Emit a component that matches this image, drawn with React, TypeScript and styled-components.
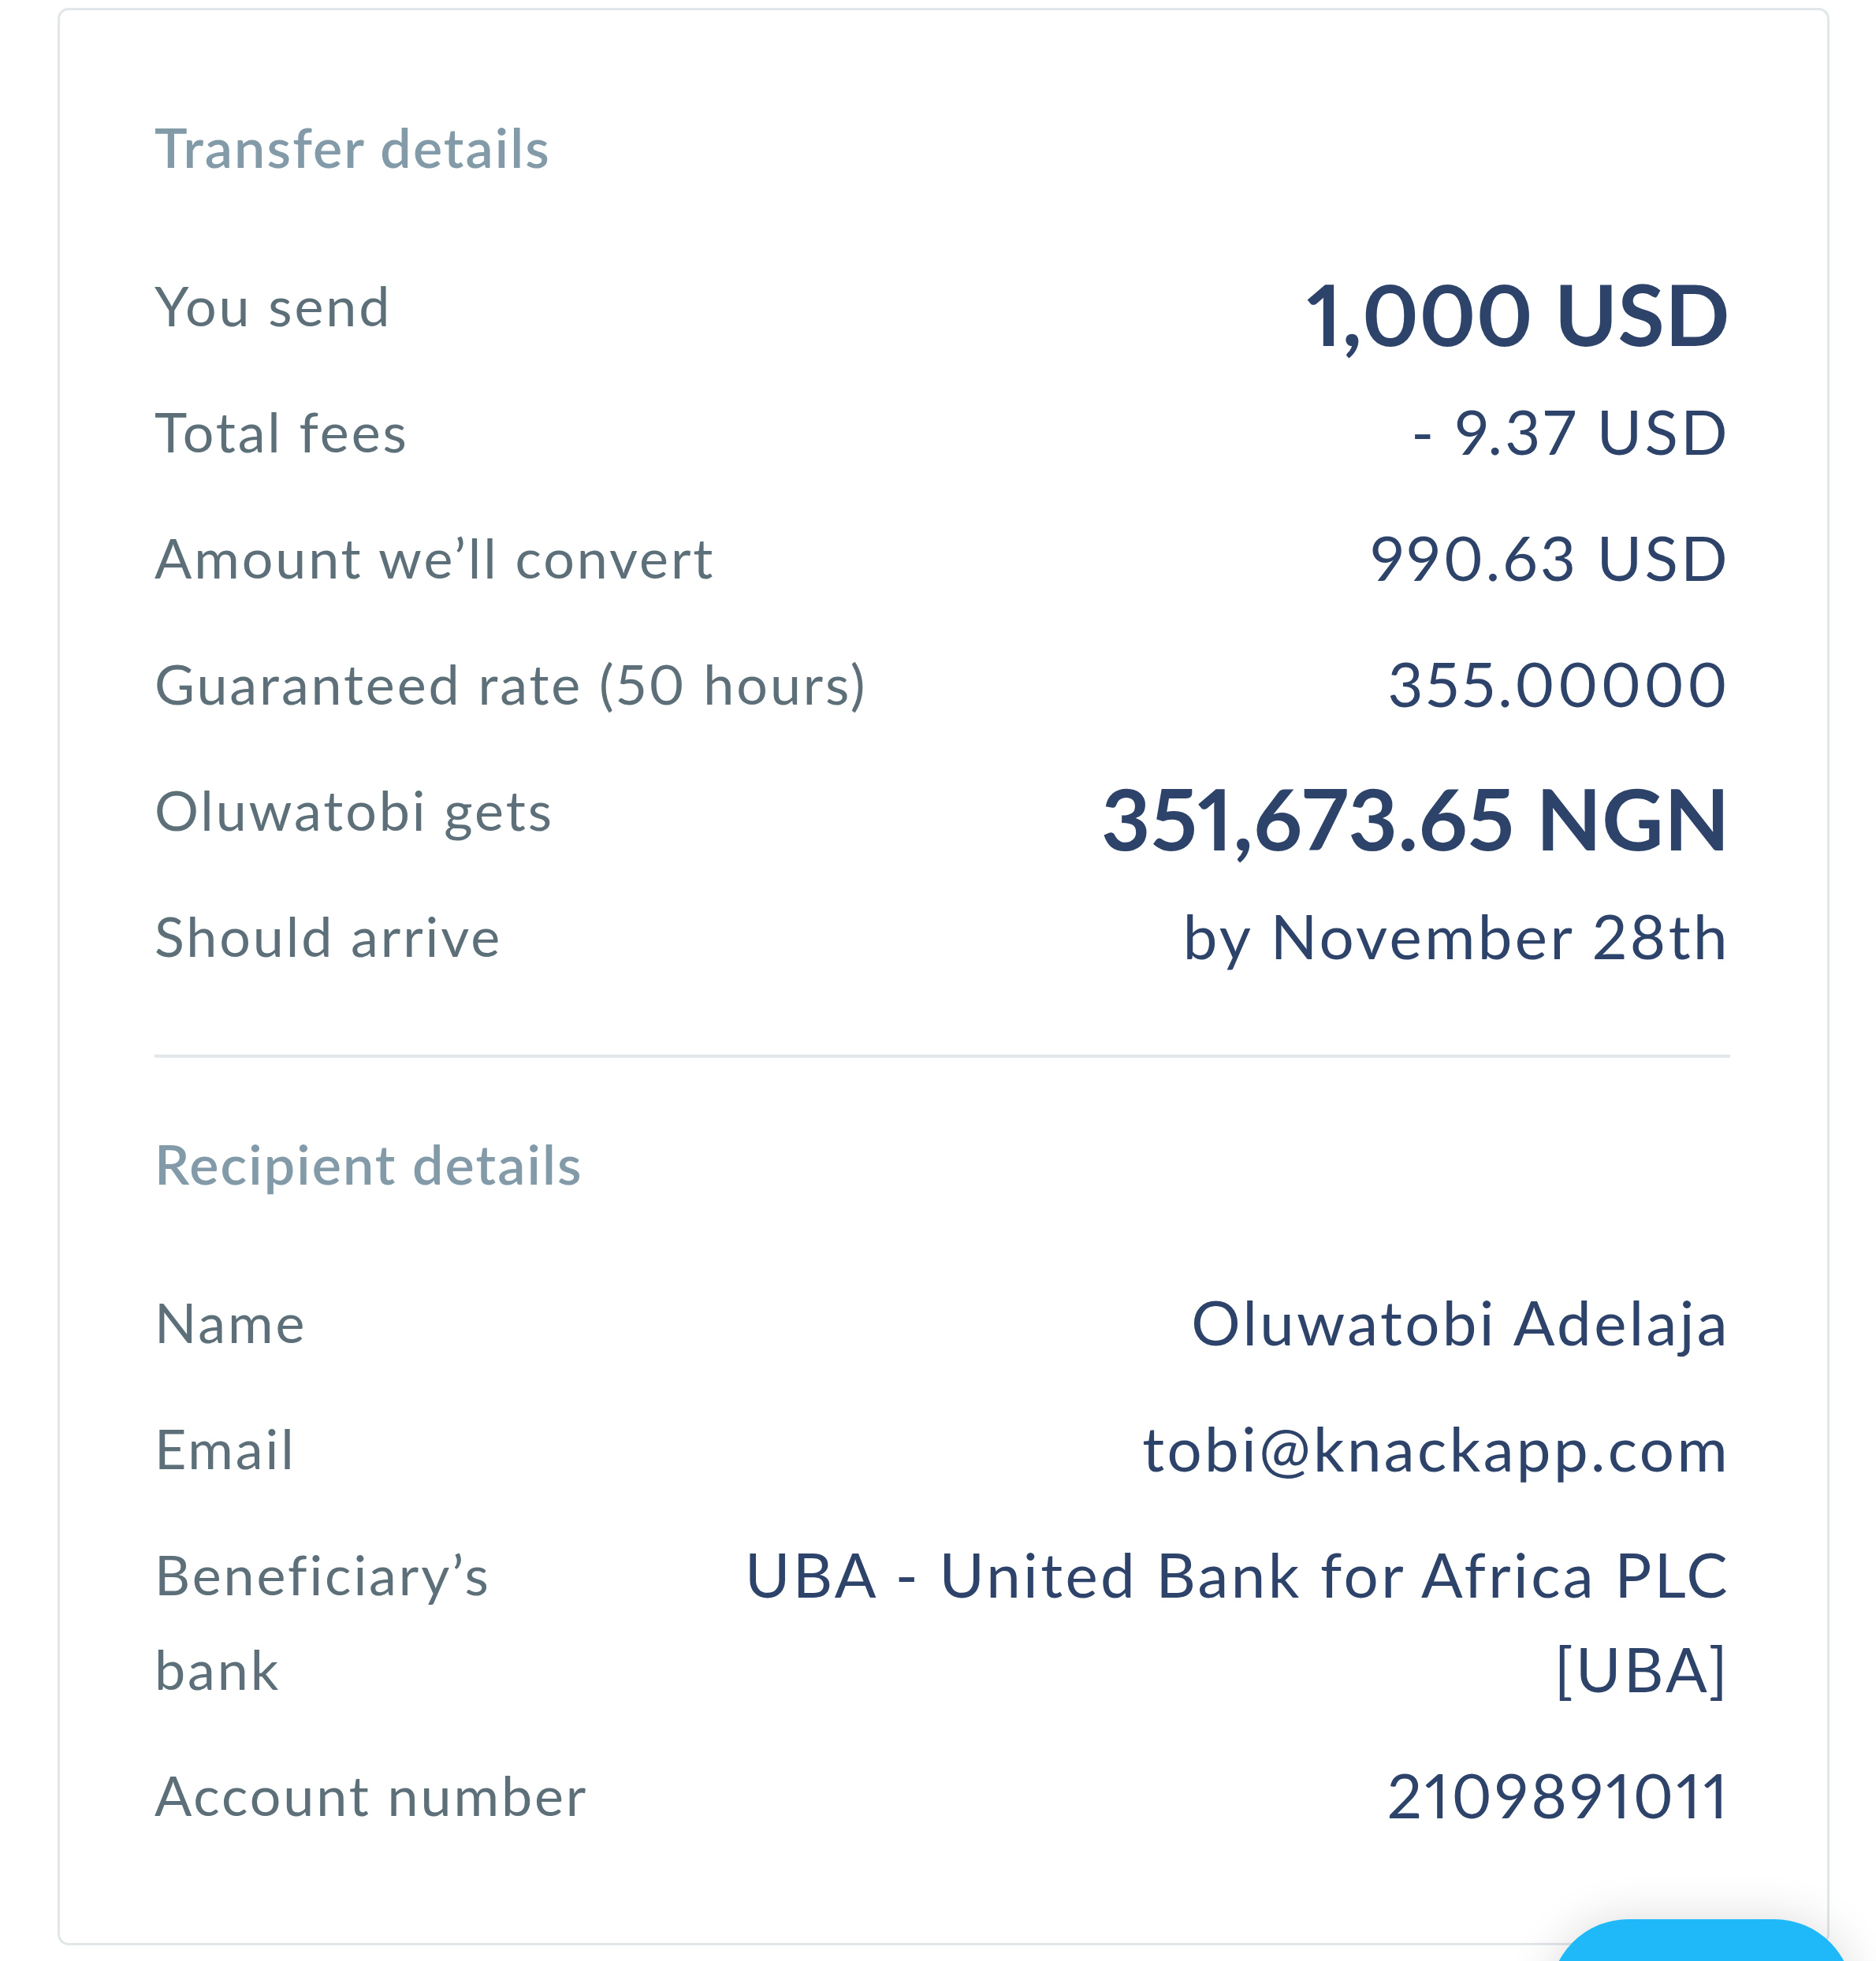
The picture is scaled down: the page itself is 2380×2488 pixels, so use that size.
import React from "react";
import styled, { createGlobalStyle } from "styled-components";

const GlobalStyle = createGlobalStyle`
  html, body {
    margin: 0;
    padding: 0;
    background: #ffffff;
  }
  body {
    font-family: Lato, "Open Sans", sans-serif;
    font-variant-numeric: proportional-nums;
    font-feature-settings: "pnum" 1;
  }
`;

const Page = styled.div`
  position: relative;
  box-sizing: border-box;
  width: 2380px;
  height: 2488px;
  padding: 10px 59px 0 73px;
  overflow: hidden;
`;

const Card = styled.section`
  box-sizing: border-box;
  border: 3px solid #e1e6e9;
  border-radius: 14px;
  padding: 113px 123px 128px 120px;
  background: #ffffff;
`;

const SectionTitle = styled.h2`
  margin: 0 0 81px 0;
  font-size: 70px;
  line-height: 120px;
  font-weight: 600;
  color: #839aa8;
  letter-spacing: 2.1px;
`;

const Rows = styled.div`
  display: flex;
  flex-direction: column;
  gap: 40px;
`;

const Row = styled.div`
  display: flex;
  justify-content: space-between;
  align-items: flex-start;
  gap: 24px;
`;

const Label = styled.span`
  flex: 0 1 auto;
  font-size: 70px;
  line-height: 120px;
  color: #5d7079;
  letter-spacing: 2.9px;
`;

const Value = styled.span<{ $big?: boolean }>`
  flex: 0 1 auto;
  text-align: right;
  color: #2e4369;
  font-size: ${(p) => (p.$big ? "108px" : "78px")};
  font-weight: ${(p) => (p.$big ? 700 : 400)};
  line-height: ${(p) => (p.$big ? "140px" : "120px")};
  margin-bottom: ${(p) => (p.$big ? "-20px" : "0")};
  letter-spacing: ${(p) => (p.$big ? "0.5px" : "3.4px")};
`;

const Divider = styled.hr`
  margin: 91px 0 74px 0;
  border: none;
  height: 4px;
  background: #e3e7ea;
`;

const FloatingButton = styled.button`
  position: absolute;
  left: 1966px;
  top: 2435px;
  width: 385px;
  height: 200px;
  border: none;
  border-radius: 100px;
  background: #1fb9fa;
  box-shadow: 0 0 60px rgba(0, 0, 0, 0.14);
  cursor: pointer;
`;

type Item = { label: string; value: string; big?: boolean };

const transfer: Item[] = [
  { label: "You send", value: "1,000 USD", big: true },
  { label: "Total fees", value: "- 9.37 USD" },
  { label: "Amount we\u2019ll convert", value: "990.63 USD" },
  { label: "Guaranteed rate (50 hours)", value: "355.00000" },
  { label: "Oluwatobi gets", value: "351,673.65 NGN", big: true },
  { label: "Should arrive", value: "by November 28th" },
];

const recipient: Item[] = [
  { label: "Name", value: "Oluwatobi Adelaja" },
  { label: "Email", value: "tobi@knackapp.com" },
  { label: "Beneficiary\u2019s bank", value: "UBA - United Bank for Africa PLC [UBA]" },
  { label: "Account number", value: "2109891011" },
];

const DetailRows: React.FC<{ items: Item[] }> = ({ items }) => (
  <Rows>
    {items.map((it) => (
      <Row key={it.label}>
        <Label>{it.label}</Label>
        <Value $big={it.big}>{it.value}</Value>
      </Row>
    ))}
  </Rows>
);

export default function App() {
  return (
    <>
      <GlobalStyle />
      <Page>
        <Card>
          <SectionTitle>Transfer details</SectionTitle>
          <DetailRows items={transfer} />
          <Divider />
          <SectionTitle>Recipient details</SectionTitle>
          <DetailRows items={recipient} />
        </Card>
        <FloatingButton aria-label="Continue" />
      </Page>
    </>
  );
}
